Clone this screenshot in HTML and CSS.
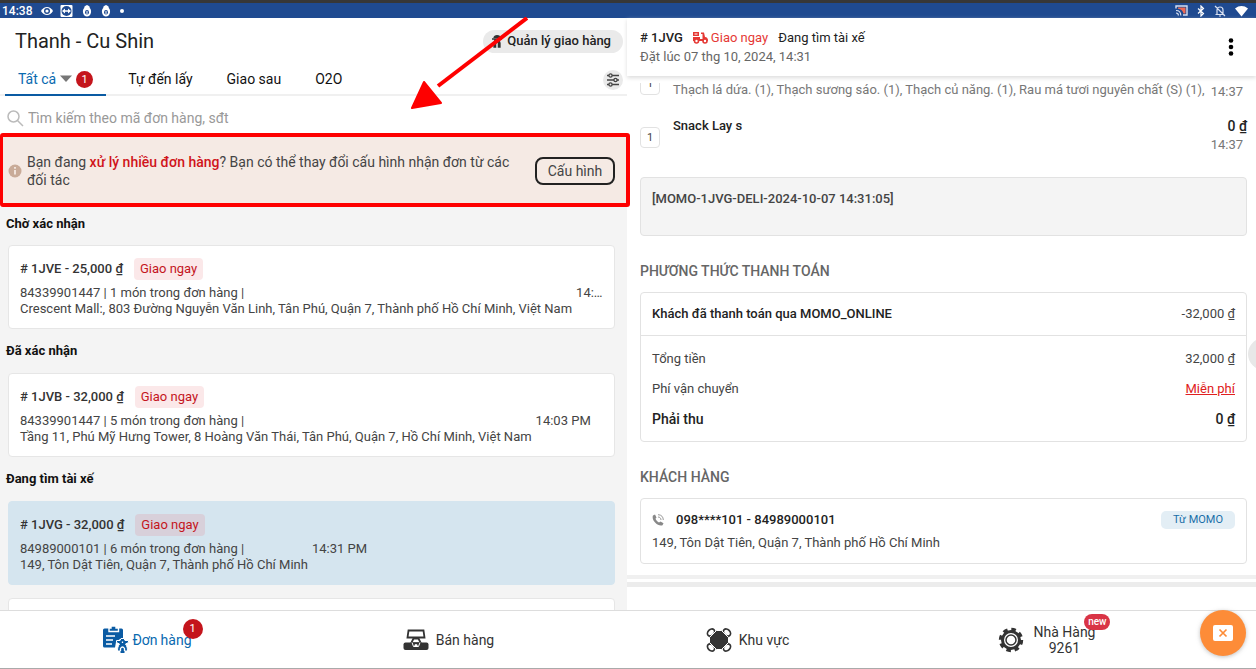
FILE: index.html
```html
<!DOCTYPE html>
<html lang="vi">
<head>
<meta charset="utf-8">
<meta name="viewport" content="width=device-width, initial-scale=1">
<title>Thanh - Cu Shin</title>
<link rel="stylesheet" href="styles.css">
</head>
<body>
<div class="status">
  <span class="clock">14:38</span>
  <svg width="14" height="12" viewBox="0 0 14 12"><path d="M1 6c3-5.300 9-5.300 12 0-3 5.300-9 5.300-12 0z" fill="#fff"/><circle cx="7" cy="6" r="3" fill="#1f4a90"/><circle cx="7" cy="6" r="1.600" fill="#fff"/></svg>
  <svg width="13" height="12" viewBox="0 0 13 12"><rect x=".5" y="0" width="12" height="12" rx="1" fill="#fff"/><circle cx="6.500" cy="6" r="5" fill="#1f4a90"/><path d="M2 6l3-2.500v1.700h3V3.500L11 6 8 8.500V6.800H5v1.700z" fill="#fff"/></svg>
  <svg class="drop" width="10" height="12" viewBox="0 0 10 12"><path d="M2.500 1.500L4 .5l1-.5 1 .5 1.500 1 .3 1.500C9 4 9.200 6 9 7.500 8.500 10 7 11.500 5 11.500S1.500 10 1 7.500C.8 6 1 4 2.200 3z" fill="#fff"/><ellipse cx="5" cy="7.300" rx="2" ry="2.300" fill="#1f4a90"/><path d="M5 6v3" stroke="#fff"/></svg>
  <svg class="drop" width="10" height="12" viewBox="0 0 10 12"><path d="M2.500 1.500L4 .5l1-.5 1 .5 1.500 1 .3 1.500C9 4 9.200 6 9 7.500 8.500 10 7 11.500 5 11.500S1.500 10 1 7.500C.8 6 1 4 2.200 3z" fill="#fff"/><ellipse cx="5" cy="7.300" rx="2" ry="2.300" fill="#1f4a90"/><path d="M5 6v3" stroke="#fff"/></svg>
  <svg class="drop" width="4" height="12" viewBox="0 0 4 12"><circle cx="2" cy="6" r="2" fill="#fff"/></svg>
  <div class="status-right">
    <svg width="13" height="11" viewBox="0 0 13 11"><path d="M1 3.500V1h11v9H8" fill="none" stroke="#d7dff0" stroke-width="1.400"/><path d="M3 2.500h7.500v6H8.500C8 6 6 4 3 3.800z" fill="#ee6a55"/><path d="M1 5.500c3 0 4.800 2 4.800 5M1 8c1.500 0 2.400 1 2.400 2.500" fill="none" stroke="#d7dff0" stroke-width="1.200"/></svg>
    <svg width="8" height="12" viewBox="0 0 8 12"><path d="M1 3.500l5.500 5L4 11V1l2.500 2.500-5.500 5" fill="none" stroke="#fff" stroke-width="1.200"/></svg>
    <svg width="12" height="12" viewBox="0 0 12 12"><path d="M3 9V5c0-4 6-4 6 0v4M1.500 9.500h9M5 11h2M1 1l10 10" fill="none" stroke="#d7dff0" stroke-width="1.200"/></svg>
    <svg width="13" height="12" viewBox="0 0 13 12"><path d="M0 3.500c4-3.300 9-3.300 13 0L6.500 11.500z" fill="#fff"/></svg>
  </div>
</div>

<main class="panes">
  <section class="orders">
    <header class="orders-head">
      <h1>Thanh - Cu Shin</h1>
      <button class="manage"><svg width="12" height="13" viewBox="0 0 12 13"><path d="M3 3c0-3 6-3 6 0M1 4h10M4 5h4l1 3v4H3V8z" fill="#333" stroke="#333" stroke-width="1.300"/><path d="M6 8v5" stroke="#eaeaea" stroke-width="1.500"/></svg>Quản lý giao hàng</button>
    </header>
    <nav class="tabs">
      <button class="tab active">Tất cả <svg width="12" height="8" viewBox="0 0 12 8"><path d="M0 .5h12L6 7z" fill="#777"/></svg><span class="count">1</span></button>
      <button class="tab">Tự đến lấy</button>
      <button class="tab">Giao sau</button>
      <button class="tab">O2O</button>
      <button class="filter" aria-label="Bộ lọc"><svg width="14" height="14" viewBox="0 0 14 14" fill="#eaeaea" stroke="#444" stroke-width="1.300"><path d="M1 2.500h12M1 7h12M1 11.500h12"/><circle cx="4.500" cy="2.500" r="1.600"/><circle cx="9.500" cy="7" r="1.600"/><circle cx="4.500" cy="11.500" r="1.600"/></svg></button>
    </nav>
    <label class="search">
      <svg width="17" height="17" viewBox="0 0 17 17" fill="none" stroke="#bbb" stroke-width="1.500"><circle cx="6.500" cy="6.500" r="5.500"/><path d="M10.500 10.500l5.500 5.500"/></svg>
      <input type="text" aria-label="Tìm kiếm" placeholder="Tìm kiếm theo mã đơn hàng, sđt">
    </label>
    <div class="banner">
      <svg width="14" height="14" viewBox="0 0 14 14"><circle cx="7" cy="7" r="6.500" fill="#c9ab98"/><path d="M7 6v4.500M7 3v1.700" stroke="#f5eae4" stroke-width="1.800"/></svg>
      <p>Bạn đang <b>xử lý nhiều đơn hàng</b>? Bạn có thể thay đổi cấu hình nhận đơn từ các đối tác</p>
      <button class="config">Cấu hình</button>
    </div>
    <div class="list">
      <h2>Chờ xác nhận</h2>
      <article class="card">
        <div class="card-top"><b># 1JVE - 25,000 ₫</b><span class="tag">Giao ngay</span></div>
        <div class="card-info"><div><p>84339901447 | 1 món trong đơn hàng |</p><p>Crescent Mall:, 803 Đường Nguyễn Văn Linh, Tân Phú, Quận 7, Thành phố Hồ Chí Minh, Việt Nam</p></div><time>14:31 PM</time></div>
      </article>
      <h2>Đã xác nhận</h2>
      <article class="card">
        <div class="card-top"><b># 1JVB - 32,000 ₫</b><span class="tag">Giao ngay</span></div>
        <div class="card-info"><div><p>84339901447 | 5 món trong đơn hàng |</p><p>Tầng 11, Phú Mỹ Hưng Tower, 8 Hoàng Văn Thái, Tân Phú, Quận 7, Hồ Chí Minh, Việt Nam</p></div><time>14:03 PM</time></div>
      </article>
      <h2>Đang tìm tài xế</h2>
      <article class="card selected">
        <div class="card-top"><b># 1JVG - 32,000 ₫</b><span class="tag">Giao ngay</span></div>
        <div class="card-info"><div><p>84989000101 | 6 món trong đơn hàng |</p><p>149, Tôn Dật Tiên, Quận 7, Thành phố Hồ Chí Minh</p></div><time>14:31 PM</time></div>
      </article>
      <article class="card next"></article>
    </div>
  </section>

  <section class="detail">
    <header class="detail-head">
      <div>
        <div class="detail-title"><b># 1JVG</b>
          <span class="now"><svg width="15" height="12" viewBox="0 0 15 12"><path d="M0 0h6v4H0zM0 5h7v2h2.500V2H8V.5h3l1 4.500c2 0 3 1.500 3 4H0z" fill="#e53935"/><circle cx="3.500" cy="9" r="2" fill="#fff" stroke="#e53935" stroke-width="1.600"/><circle cx="12" cy="9" r="2" fill="#fff" stroke="#e53935" stroke-width="1.600"/><path d="M1.500 2h3" stroke="#fff"/></svg>Giao ngay</span>
          <span>Đang tìm tài xế</span></div>
        <p class="placed">Đặt lúc 07 thg 10, 2024, 14:31</p>
      </div>
      <button class="more" aria-label="Thêm"><svg width="6" height="18" viewBox="0 0 6 18"><circle cx="3" cy="2.500" r="2.300"/><circle cx="3" cy="9" r="2.300"/><circle cx="3" cy="15.500" r="2.300"/></svg></button>
    </header>
    <div class="detail-body">
      <div class="item first"><span class="qty">1</span><p class="options">Thạch lá dứa. (1), Thạch sương sáo. (1), Thạch củ năng. (1), Rau má tươi nguyên chất (S) (1),</p><span class="time">14:37</span></div>
      <div class="item"><span class="qty">1</span><p class="name">Snack Lay s</p><div class="price"><b>0 ₫</b><span class="time">14:37</span></div></div>
      <div class="note">[MOMO-1JVG-DELI-2024-10-07 14:31:05]</div>
      <h3>PHƯƠNG THỨC THANH TOÁN</h3>
      <div class="box">
        <div class="row paid"><b>Khách đã thanh toán qua MOMO_ONLINE</b><span>-32,000 ₫</span></div>
        <div class="sums">
          <div class="row"><span>Tổng tiền</span><span>32,000 ₫</span></div>
          <div class="row"><span>Phí vận chuyển</span><a href="#">Miễn phí</a></div>
          <div class="row total"><b>Phải thu</b><b>0 ₫</b></div>
        </div>
      </div>
      <h3>KHÁCH HÀNG</h3>
      <div class="box customer">
        <div class="row"><svg width="12" height="12" viewBox="0 0 12 12"><path d="M1 1.500L3 .5l1.500 3-1 1.200c.5 1.500 1.800 2.900 3.500 3.700L8.500 7.500l3 1.700-1 2C6 13-1 6 1 1.500z" fill="#888"/><path d="M6 3c1.800 0 3 1.200 3 3M6 .7C9.500.7 11.300 3 11.300 6" fill="none" stroke="#999"/></svg><b>098****101 - 84989000101</b><span class="source">Từ MOMO</span></div>
        <p>149, Tôn Dật Tiên, Quận 7, Thành phố Hồ Chí Minh</p>
      </div>
      <div class="band"></div>
    </div>
  </section>
</main>

<nav class="bottom">
  <button class="nav-item current"><svg width="26" height="28" viewBox="0 0 26 28"><path d="M1.500 2.500h17q1.500 0 1.500 1.500v9h-3l-4 3-1 5.500H1.500q-1.500 0-1.500-1.500V4q0-1.500 1.500-1.500z" fill="#0a5ba3"/><path d="M6 5.500V2h2V0h5v2h2.500v3.500z" fill="#0a5ba3" stroke="#fff" stroke-width="1.400"/><path d="M3 10h9M3 14h7M3 18h6" stroke="#fff" stroke-width="1.400"/><path d="M13.500 14.500h3.500l1-2h3l1 2h3.500v2l-3 1.500c1.500 2 2 4 2 7h-2.500v2.500h-5V25h-2.500c0-3 .5-5 2-7l-3-1.500z" fill="#0a5ba3" stroke="#fff" stroke-width="1"/><path d="M19.500 15.500v1.500M17.500 25v-2.500q2-3 4 0V25" fill="none" stroke="#fff" stroke-width="1.300"/></svg>Đơn <span class="anchor">hàng<span class="count large">1</span></span></button>
  <button class="nav-item"><svg width="26" height="22" viewBox="0 0 26 22"><path d="M5.500 1.500h15l1 7h-17z" fill="#fff" stroke="#333" stroke-width="1.800"/><path d="M10.500 9.500h5l2.500 5H8z" fill="#fff" stroke="#333" stroke-width="1.800"/><rect x=".5" y="13.500" width="25" height="7.500" rx="2" fill="#333"/><path d="M9 13.500l1.500 4h5l1.500-4" stroke="#fff" fill="#333" stroke-width="1"/><circle cx="13" cy="16.500" r="1.600" fill="#fff"/></svg>Bán hàng</button>
  <button class="nav-item"><svg width="26" height="24" viewBox="0 0 26 24"><g fill="#fff" stroke="#333" stroke-width="1.700"><ellipse cx="5" cy="4.500" rx="4" ry="3" transform="rotate(-45 5 4.500)"/><ellipse cx="21" cy="4.500" rx="4" ry="3" transform="rotate(45 21 4.500)"/><ellipse cx="5" cy="19.500" rx="4" ry="3" transform="rotate(45 5 19.500)"/><ellipse cx="21" cy="19.500" rx="4" ry="3" transform="rotate(-45 21 19.500)"/></g><path d="M10.500 2.500h5l7 7v5l-7 7h-5l-7-7v-5z" fill="#333" stroke="#fff" stroke-width="1"/></svg>Khu vực</button>
  <button class="nav-item place"><svg width="26" height="26" viewBox="0 0 26 26"><circle cx="13" cy="13" r="10.500" fill="none" stroke="#333" stroke-width="3.400" stroke-dasharray="4.500 3.747"/><circle cx="13" cy="13" r="8.500" fill="#fff" stroke="#333" stroke-width="3"/><circle cx="13" cy="13" r="5" fill="none" stroke="#333" stroke-width="1.500"/></svg><span class="anchor">Nhà Hàng<br>9261<span class="new">new</span></span></button>
</nav>

<button class="fab" aria-label="Đóng"><svg width="20" height="16" viewBox="0 0 20 16"><rect width="20" height="16" rx="2" fill="#fff"/><path d="M6.500 4.500l7 7M13.500 4.500l-7 7" stroke="#fd8c38" stroke-width="1.700"/></svg></button>
<button class="side-handle" aria-label="Mở"></button>
<svg class="arrow" width="118" height="94" viewBox="0 0 118 94"><path d="M117 1L28 69" stroke="#fe0000" stroke-width="4"/><path d="M2 91L14 65 31 86z" fill="#fe0000" stroke="#fe0000" stroke-width="2" stroke-linejoin="round"/></svg>
</body>
</html>
```
FILE: styles.css
```css
* { box-sizing: border-box; }
body {
  margin: 0;
  height: 100vh;
  display: flex;
  flex-direction: column;
  overflow: hidden;
  position: relative;
  font: 13px/16px Roboto, "Noto Sans", sans-serif;
  color: #444;
  background: #fff;
}
h1, h2, h3, p { margin: 0; }
button {
  font: inherit;
  color: inherit;
  border: 0;
  padding: 0;
  background: none;
}
b { font-weight: 500; }
svg { flex: none; }

.status {
  display: flex;
  align-items: center;
  gap: 6px;
  height: 18px;
  flex: none;
  padding: 0 8px 0 2px;
  border-top: 3px solid #373737;
  background: #1f4a90;
  color: #fff;
  font-size: 12px;
  line-height: 12px;
  font-weight: 500;
}
.clock { margin-right: 2px; }
.drop { margin-left: 3px; }
.status-right {
  margin-left: auto;
  display: flex;
  align-items: center;
  gap: 9px;
}

.panes {
  flex: 1;
  min-height: 0;
  display: grid;
  grid-template-columns: minmax(0, 1fr) minmax(0, 1fr);
}
.orders {
  display: flex;
  flex-direction: column;
  min-height: 0;
  background: #fff;
}
.orders-head {
  display: flex;
  align-items: center;
  justify-content: space-between;
  height: 46px;
  flex: none;
  padding: 0 5px 0 15px;
}
h1 {
  font-size: 20px;
  line-height: 24px;
  font-weight: 400;
  color: #222;
}
.manage {
  display: flex;
  align-items: center;
  gap: 4px;
  height: 23px;
  padding: 0 12px 0 8px;
  border-radius: 12px;
  background: #eaeaea;
  color: #222;
  font-weight: 500;
}
.tabs {
  display: flex;
  height: 32px;
  flex: none;
  padding: 0 5px;
  border-bottom: 2px solid #f0f0f0;
  font-size: 14px;
  color: #111;
}
.tab {
  padding: 0 12px;
  margin: 0 5px;
}
.tab.active {
  display: flex;
  align-items: center;
  gap: 4px;
  padding: 0 13px;
  margin: 0 5px 0 0;
  height: 32px;
  border-bottom: 2px solid #0a5ba3;
  color: #0a6ab0;
}
.count {
  width: 17px;
  height: 17px;
  border-radius: 50%;
  background: #c4151c;
  color: #fff;
  font-size: 11px;
  line-height: 17px;
  text-align: center;
}
.filter {
  width: 20px;
  height: 20px;
  margin: 6px 0 0 auto;
  border-radius: 50%;
  background: #eaeaea;
  display: grid;
  place-items: center;
}
.search {
  display: flex;
  align-items: center;
  gap: 4px;
  height: 37px;
  flex: none;
  padding: 7px 7px 0;
}
.search input {
  flex: 1;
  border: 0;
  padding: 0;
  outline: 0;
  font: inherit;
  font-size: 14px;
}
.search input::placeholder { color: #999; }
.banner {
  display: flex;
  align-items: center;
  gap: 5px;
  height: 74px;
  flex: none;
  margin-right: -2px;
  padding: 2px 11px 0 5px;
  position: relative;
  z-index: 1;
  border: 4px solid #fe0000;
  border-left-width: 3px;
  border-radius: 3px;
  background: #f5eae4;
  font-size: 14px;
  line-height: 18px;
}
.banner p { flex: 1; }
.banner b { color: #d0141a; }
.config {
  margin-left: 15px;
  height: 28px;
  width: 80px;
  border: 2px solid #222;
  border-radius: 8px;
}
.list {
  flex: 1;
  min-height: 0;
  overflow: hidden;
  padding: 0 13px 0 8px;
  background: #f4f4f4;
}
h2 {
  height: 44px;
  margin-left: -2px;
  padding-top: 14px;
  font-size: 13px;
  line-height: 16px;
  font-weight: 700;
  color: #111;
}
.list h2:first-child { height: 38px; padding-top: 9px; }
.card {
  border: 1px solid #e6e6e6;
  border-radius: 4px;
  background: #fff;
  padding: 12px 8px 11px 11px;
}
.card.selected { background: #d5e5ef; border-color: #d5e5ef; }
.card.next { margin-top: 13px; height: 84px; }
.card-top {
  display: flex;
  align-items: center;
  gap: 11px;
  height: 22px;
  margin-bottom: 5px;
}
.card-top b { color: #333; }
.tag {
  padding: 3px 6px;
  border-radius: 4px;
  background: #fbe8e9;
  color: #c4151c;
}
.selected .tag { background: #d8d0da; }
.card-info { display: flex; gap: 4px; }
.card-info div { flex: none; }
.card-info p { height: 16px; white-space: nowrap; }
.card-info time {
  min-width: 0;
  overflow: hidden;
  text-overflow: ellipsis;
  white-space: nowrap;
}

.detail {
  display: flex;
  flex-direction: column;
  min-height: 0;
  margin-left: -1px;
  background: #fff;
}
.detail-head {
  display: flex;
  align-items: center;
  justify-content: space-between;
  height: 58px;
  flex: none;
  margin-bottom: 7px;
  padding: 0 18px 0 13px;
  box-shadow: 0 2px 4px #ddd;
  position: relative;
}
.detail-title { display: flex; gap: 10px; line-height: 20px; color: #222; }
.now { display: flex; align-items: center; gap: 3px; color: #e53935; }
.placed { line-height: 18px; color: #666; }
.more { padding: 8px 4px 4px; }
.detail-body {
  flex: 1;
  min-height: 0;
  overflow: hidden;
  padding: 0 9px 0 13px;
}
.item {
  display: flex;
  gap: 13px;
  padding-top: 4px;
  height: 63px;
}
.item.first { height: 40px; padding: 0; margin-top: -9px; }
.qty {
  flex: none;
  width: 20px;
  height: 21px;
  margin-top: 9px;
  border: 1px solid #e2e2e2;
  border-radius: 4px;
  text-align: center;
  font-size: 11px;
  line-height: 19px;
}
.first .qty { margin-top: 0; line-height: 18px; }
.options {
  flex: 1;
  min-width: 0;
  padding-top: 8px;
  white-space: nowrap;
  color: #777;
}
.name { flex: 1; color: #222; font-weight: 500; }
.time { color: #777; padding-right: 4px; }
.first .time { padding-top: 10px; }
.price { display: flex; flex-direction: column; align-items: flex-end; line-height: 22px; }
.price b { color: #222; line-height: 16px; font-size: 14px; }
.note {
  height: 59px;
  padding: 13px 11px;
  border: 1px solid #e2e2e2;
  border-radius: 4px;
  background: #f4f4f4;
  font-weight: 500;
}
h3 {
  padding: 27px 0 12px;
  font-size: 14px;
  line-height: 17px;
  font-weight: 500;
  color: #666;
}
.box {
  border: 1px solid #e2e2e2;
  border-radius: 4px;
}
.row {
  display: flex;
  align-items: center;
  justify-content: space-between;
  padding: 0 11px;
  height: 30px;
}
.row b { color: #222; }
.paid { height: 43px; border-bottom: 1px solid #e2e2e2; }
.sums { padding: 8px 0 7px; }
.row a { color: #e02020; }
.row.total b { font-size: 14px; }
.customer { padding: 6px 0 12px; }
.customer .row { gap: 12px; }
.customer p { padding: 0 11px; }
.source {
  margin-left: auto;
  padding: 1px 12px;
  border-radius: 5px;
  background: #e3eef5;
  color: #1a6ea8;
  font-size: 11px;
}
.band {
  height: 12px;
  margin: 11px -9px 0 -13px;
  border-top: 4px solid #f0f0f0;
  border-bottom: 5px solid #ececec;
}

.bottom {
  display: grid;
  grid-template-columns: repeat(4, 1fr);
  height: 59px;
  flex: none;
  padding-right: 60px;
  border-top: 1px solid #ddd;
  border-bottom: 1px solid #aaa;
  font-size: 14px;
}
.nav-item {
  display: flex;
  align-items: center;
  justify-content: center;
  gap: 7px;
  color: #333;
}
.nav-item.current { color: #0a6ab0; gap: 3px; padding-right: 4px; }
.nav-item.place { gap: 10px; }
.anchor { position: relative; text-align: center; }
.count.large {
  position: absolute;
  top: -13px;
  right: -11px;
  width: 20px;
  height: 20px;
  line-height: 20px;
}
.new {
  position: absolute;
  top: -10px;
  right: -15px;
  padding: 0 4px;
  border-radius: 8px;
  background: #d93446;
  color: #fff;
  font-size: 10px;
  font-weight: 500;
  line-height: 16px;
}
.fab {
  position: absolute;
  right: 10px;
  bottom: 13px;
  width: 46px;
  height: 46px;
  border-radius: 50%;
  background: #fd8c38;
  box-shadow: 0 1px 4px #8888;
  display: grid;
  place-items: center;
  z-index: 2;
}
.side-handle {
  position: absolute;
  top: 338px;
  right: -24px;
  width: 32px;
  height: 32px;
  border-radius: 50%;
  background: #e8e8e8;
}
.arrow {
  position: absolute;
  left: 410px;
  top: 17px;
  z-index: 3;
}
```
